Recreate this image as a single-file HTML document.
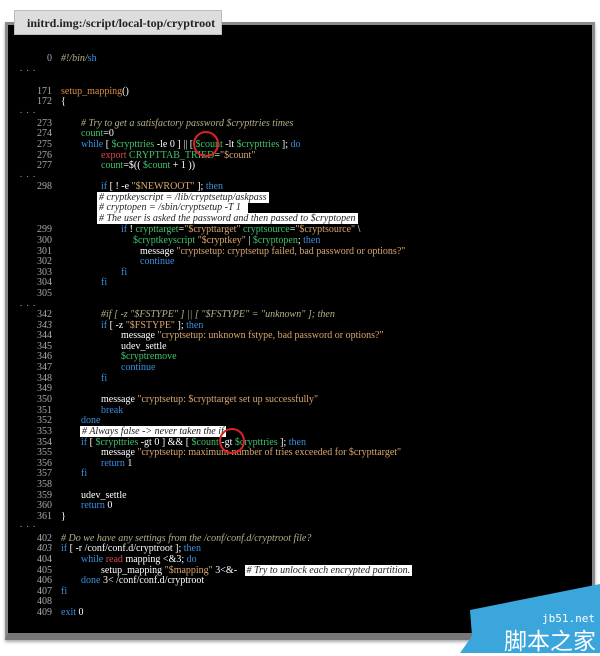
<!DOCTYPE html>
<html><head><meta charset="utf-8"><style>
*{margin:0;padding:0;box-sizing:border-box}
body{width:600px;height:653px;background:#fff;position:relative;overflow:hidden;font-family:"Liberation Serif",serif}
.box{position:absolute;left:5px;top:22px;width:590px;height:618px;background:#000;border:3px solid #8a8a8a;border-bottom:7px solid #777;box-shadow:0 2px 3px #aaa}
.tab{position:absolute;left:14px;top:10px;width:208px;height:25px;background:#ddd;border:1px solid #bbb;font-weight:bold;font-size:12px;color:#222;padding:5px 0 0 12px;white-space:nowrap}
.l{position:absolute;font-size:10px;line-height:11px;white-space:pre;color:#fff}
.n{position:absolute;left:20px;width:32px;text-align:right;font-size:10px;line-height:11px;color:#aaa}
.d{position:absolute;left:20px;font-size:9px;color:#aaa;letter-spacing:1px}
.o{color:#d98c3a}.g{color:#3fc36a}.b{color:#3a8ee0}.c{color:#b7b08a;font-style:italic}.s{color:#d9a66e}.r{color:#e04545}
.hl{background:#fff;color:#222;font-style:italic;padding:0 2px}
.i{font-style:italic}
.circ{position:absolute;width:26px;height:26px;border:2px solid #d22;border-radius:50%}
</style></head><body>
<div class="box"></div>
<div class="tab">initrd.img:/script/local-top/cryptroot</div>

<div class="n" style="top:53px">0</div><div class="l" style="top:53px;left:61px"><span class="c">#!/bin/</span><span class="b">sh</span></div>
<div class="d" style="top:63px">. . .</div>
<div class="n" style="top:86px">171</div><div class="l" style="top:86px;left:61px"><span class="o">setup_mapping</span>()</div>
<div class="n" style="top:96px">172</div><div class="l" style="top:96px;left:61px">{</div>
<div class="d" style="top:105px">. . .</div>
<div class="n" style="top:118px">273</div><div class="l" style="top:118px;left:81px"><span class="c"># Try to get a satisfactory password $crypttries times</span></div>
<div class="n" style="top:128px">274</div><div class="l" style="top:128px;left:81px"><span class="g">count</span>=0</div>
<div class="n" style="top:139px">275</div><div class="l" style="top:139px;left:81px"><span class="b">while</span> [ <span class="g">$crypttries</span> -le 0 ] || [ <span class="g">$count</span> -lt <span class="g">$crypttries</span> ]; <span class="b">do</span></div>
<div class="n" style="top:150px">276</div><div class="l" style="top:150px;left:101px"><span class="r">export</span> <span class="g">CRYPTTAB_TRIED</span>=<span class="s">"$count"</span></div>
<div class="n" style="top:160px">277</div><div class="l" style="top:160px;left:101px"><span class="g">count</span>=$(( <span class="g">$count</span> + 1 ))</div>
<div class="d" style="top:169px">. . .</div>
<div class="n" style="top:181px">298</div><div class="l" style="top:181px;left:101px"><span class="b">if</span> [ ! -e <span class="s">"$NEWROOT"</span> ]; <span class="b">then</span></div>
<div class="l" style="top:192px;left:97px"><span class="hl"># cryptkeyscript = /lib/cryptsetup/askpass</span></div>
<div class="l" style="top:202px;left:97px"><span class="hl"># cryptopen = /sbin/cryptsetup -T 1  </span></div>
<div class="l" style="top:213px;left:97px"><span class="hl"># The user is asked the password and then passed to $cryptopen</span></div>
<div class="n" style="top:224px">299</div><div class="l" style="top:224px;left:121px"><span class="b">if</span> ! <span class="g">crypttarget</span>=<span class="s">"$crypttarget"</span> <span class="g">cryptsource</span>=<span class="s">"$cryptsource"</span> \</div>
<div class="n" style="top:235px">300</div><div class="l" style="top:235px;left:133px"><span class="g">$cryptkeyscript</span> <span class="s">"$cryptkey"</span> | <span class="g">$cryptopen</span>; <span class="b">then</span></div>
<div class="n" style="top:246px">301</div><div class="l" style="top:246px;left:140px">message <span class="s">"cryptsetup: cryptsetup failed, bad password or options?"</span></div>
<div class="n" style="top:256px">302</div><div class="l" style="top:256px;left:140px"><span class="b">continue</span></div>
<div class="n" style="top:267px">303</div><div class="l" style="top:267px;left:121px"><span class="b">fi</span></div>
<div class="n" style="top:277px">304</div><div class="l" style="top:277px;left:101px"><span class="b">fi</span></div>
<div class="n" style="top:288px">305</div>
<div class="d" style="top:298px">. . .</div>
<div class="n" style="top:309px">342</div><div class="l" style="top:309px;left:101px"><span class="c">#if [ -z "$FSTYPE" ] || [ "$FSTYPE" = "unknown" ]; then</span></div>
<div class="n i" style="top:320px">343</div><div class="l" style="top:320px;left:101px"><span class="b">if</span> [ -z <span class="s">"$FSTYPE"</span> ]; <span class="b">then</span></div>
<div class="n" style="top:330px">344</div><div class="l" style="top:330px;left:121px">message <span class="s">"cryptsetup: unknown fstype, bad password or options?"</span></div>
<div class="n" style="top:341px">345</div><div class="l" style="top:341px;left:121px">udev_settle</div>
<div class="n" style="top:351px">346</div><div class="l" style="top:351px;left:121px"><span class="g">$cryptremove</span></div>
<div class="n" style="top:362px">347</div><div class="l" style="top:362px;left:121px"><span class="b">continue</span></div>
<div class="n" style="top:373px">348</div><div class="l" style="top:373px;left:101px"><span class="b">fi</span></div>
<div class="n" style="top:383px">349</div>
<div class="n" style="top:394px">350</div><div class="l" style="top:394px;left:101px">message <span class="s">"cryptsetup: $crypttarget set up successfully"</span></div>
<div class="n" style="top:405px">351</div><div class="l" style="top:405px;left:101px"><span class="b">break</span></div>
<div class="n" style="top:415px">352</div><div class="l" style="top:415px;left:81px"><span class="b">done</span></div>
<div class="n" style="top:426px">353</div><div class="l" style="top:426px;left:80px"><span class="hl"># Always false -&gt; never taken the if</span></div>
<div class="n" style="top:437px">354</div><div class="l" style="top:437px;left:81px"><span class="b">if</span> [ <span class="g">$crypttries</span> -gt 0 ] &amp;&amp; [ <span class="g">$count</span> -gt <span class="g">$crypttries</span> ]; <span class="b">then</span></div>
<div class="n" style="top:447px">355</div><div class="l" style="top:447px;left:101px">message <span class="s">"cryptsetup: maximum number of tries exceeded for $crypttarget"</span></div>
<div class="n" style="top:458px">356</div><div class="l" style="top:458px;left:101px"><span class="b">return</span> 1</div>
<div class="n" style="top:468px">357</div><div class="l" style="top:468px;left:81px"><span class="b">fi</span></div>
<div class="n" style="top:479px">358</div>
<div class="n" style="top:490px">359</div><div class="l" style="top:490px;left:81px">udev_settle</div>
<div class="n" style="top:500px">360</div><div class="l" style="top:500px;left:81px"><span class="b">return</span> 0</div>
<div class="n" style="top:511px">361</div><div class="l" style="top:511px;left:61px">}</div>
<div class="d" style="top:519px">. . .</div>
<div class="n" style="top:533px">402</div><div class="l" style="top:533px;left:61px"><span class="c"># Do we have any settings from the /conf/conf.d/cryptroot file?</span></div>
<div class="n i" style="top:543px">403</div><div class="l" style="top:543px;left:61px"><span class="b">if</span> [ -r /conf/conf.d/cryptroot ]; <span class="b">then</span></div>
<div class="n" style="top:554px">404</div><div class="l" style="top:554px;left:81px"><span class="b">while</span> <span class="r">read</span> mapping &lt;&amp;3; <span class="b">do</span></div>
<div class="n" style="top:565px">405</div><div class="l" style="top:565px;left:101px">setup_mapping <span class="s">"$mapping"</span> 3&lt;&amp;-   <span class="hl"># Try to unlock each encrypted partition.</span></div>
<div class="n" style="top:575px">406</div><div class="l" style="top:575px;left:81px"><span class="b">done</span> 3&lt; /conf/conf.d/cryptroot</div>
<div class="n" style="top:586px">407</div><div class="l" style="top:586px;left:61px"><span class="b">fi</span></div>
<div class="n" style="top:596px">408</div>
<div class="n" style="top:607px">409</div><div class="l" style="top:607px;left:61px"><span class="b">exit</span> 0</div>

<div class="circ" style="left:193px;top:131px"></div>
<div class="circ" style="left:219px;top:428px"></div>

<svg style="position:absolute;left:0;top:0" width="600" height="653"><polygon points="470,610 600,584 600,653 460,653 472,636" fill="#3aa6dc"/></svg>
<div style="position:absolute;left:542px;top:612px;color:#fff;font-family:'DejaVu Sans Mono',monospace;font-size:11px">jb51.net</div>
<div style="position:absolute;left:504px;top:627px;color:#fff;font-family:'WenQuanYi Zen Hei','Noto Sans CJK SC',sans-serif;font-size:23px;line-height:24px">脚本之家</div>
</body></html>
